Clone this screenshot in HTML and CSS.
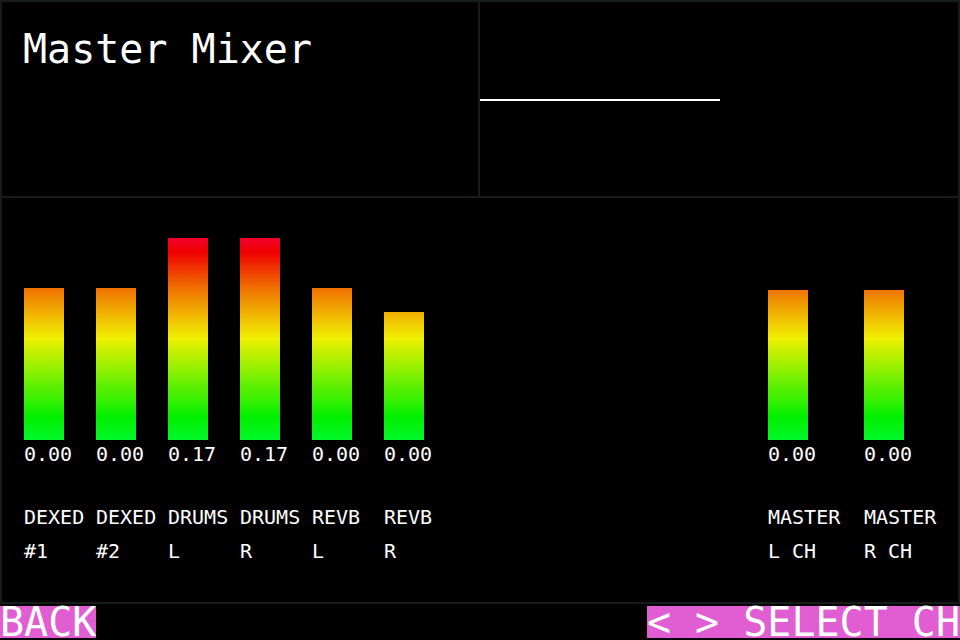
FILE: index.html
```html
<!DOCTYPE html>
<html lang="en">

<head>
  <meta charset="UTF-8">
  <meta name="viewport" content="width=device-width, initial-scale=1.0">
  <title>Master Mixer</title>
  <link rel="stylesheet" href="styles.css">
</head>

<body>
  <div class="screen">
    <div class="frame">
      <div class="title-box">
        <h1 class="title">Master Mixer</h1>
      </div>

      <div class="scope">
        <div class="trace"></div>
      </div>

      <div class="mixer">
        <div class="channel">
          <div class="meter"><div class="bar" style="height: 152px;"></div></div>
          <div class="value">0.00</div>
          <div class="label">DEXED<br>#1</div>
        </div>
        <div class="channel">
          <div class="meter"><div class="bar" style="height: 152px;"></div></div>
          <div class="value">0.00</div>
          <div class="label">DEXED<br>#2</div>
        </div>
        <div class="channel">
          <div class="meter"><div class="bar" style="height: 202px;"></div></div>
          <div class="value">0.17</div>
          <div class="label">DRUMS<br>L</div>
        </div>
        <div class="channel">
          <div class="meter"><div class="bar" style="height: 202px;"></div></div>
          <div class="value">0.17</div>
          <div class="label">DRUMS<br>R</div>
        </div>
        <div class="channel">
          <div class="meter"><div class="bar" style="height: 152px;"></div></div>
          <div class="value">0.00</div>
          <div class="label">REVB<br>L</div>
        </div>
        <div class="channel">
          <div class="meter"><div class="bar" style="height: 128px;"></div></div>
          <div class="value">0.00</div>
          <div class="label">REVB<br>R</div>
        </div>

        <div class="channel master first-master">
          <div class="meter"><div class="bar" style="height: 150px;"></div></div>
          <div class="value">0.00</div>
          <div class="label">MASTER<br>L CH</div>
        </div>
        <div class="channel master">
          <div class="meter"><div class="bar" style="height: 150px;"></div></div>
          <div class="value">0.00</div>
          <div class="label">MASTER<br>R CH</div>
        </div>
      </div>
    </div>

    <div class="softkeys">
      <div class="key">BACK</div>
      <div class="key">&lt; &gt; SELECT CH</div>
    </div>
  </div>
</body>

</html>
```

FILE: styles.css
```css
html,
body {
  margin: 0;
  padding: 0;
  background-color: #000;
}

body {
  font-family: 'DejaVu Sans Mono', 'Liberation Mono', monospace;
  color: #fff;
}

.screen {
  width: 960px;
  height: 640px;
  background-color: #000;
}

/* grid lines come from the frame background showing through the gaps */
.frame {
  display: grid;
  grid-template-columns: 476px 478px;
  grid-template-rows: 194px 404px;
  gap: 2px;
  padding: 2px;
  background-color: #161b1b;
}

.title-box,
.scope,
.mixer {
  background-color: #000;
}

.title-box {
  padding: 27px 0 0 21px;
}

.title {
  margin: 0;
  font-size: 40px;
  line-height: 40px;
  font-weight: normal;
}

.trace {
  width: 240px;
  height: 2px;
  margin-top: 97px;
  background-color: #fff;
}

.mixer {
  grid-column: 1 / 3;
  display: flex;
  padding: 40px 0 0 22px;
}

.channel {
  width: 72px;
  flex-shrink: 0;
}

.channel.master {
  width: 96px;
}

.first-master {
  margin-left: 312px;
}

.meter {
  height: 202px;
  display: flex;
  align-items: flex-end;
}

.bar {
  width: 40px;
  background-image: linear-gradient(to bottom,
      #f0002c 0px,
      #f00000 14px,
      #f07000 50px,
      #f0f000 100px,
      #70f000 142px,
      #00f000 180px,
      #00f82c 202px);
  background-size: 100% 202px;
  background-position: bottom;
  background-repeat: no-repeat;
}

.value {
  margin-top: 4px;
  font-size: 20px;
  line-height: 20px;
}

.label {
  margin-top: 36px;
  font-size: 20px;
  line-height: 34px;
  white-space: nowrap;
}

.softkeys {
  display: flex;
  justify-content: space-between;
  padding: 2px 0;
}

.key {
  height: 32px;
  font-size: 40px;
  line-height: 32px;
  background-color: #e05dd2;
  color: #fff;
  white-space: pre;
}
```
